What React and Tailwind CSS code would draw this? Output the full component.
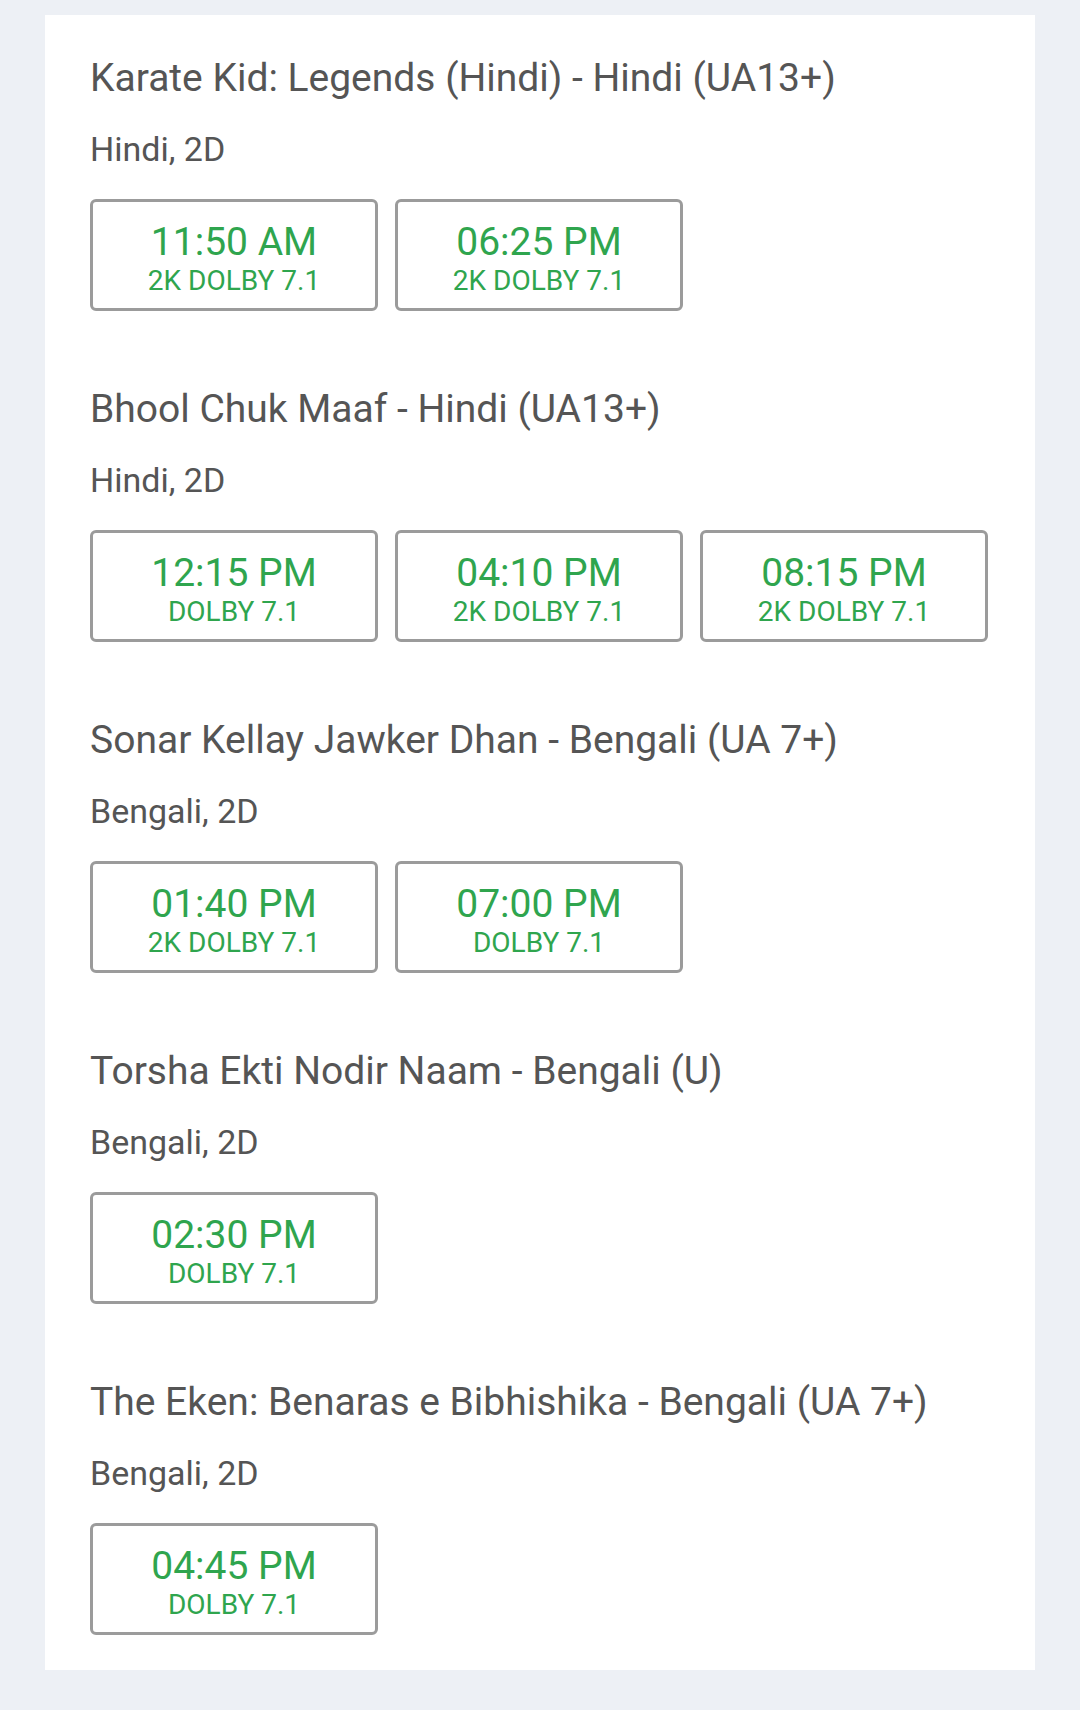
import React from "react";

const sections = [
  {
    title: "Karate Kid: Legends (Hindi) - Hindi (UA13+)",
    sub: "Hindi, 2D",
    shows: [
      ["11:50 AM", "2K DOLBY 7.1"],
      ["06:25 PM", "2K DOLBY 7.1"],
    ],
  },
  {
    title: "Bhool Chuk Maaf - Hindi (UA13+)",
    sub: "Hindi, 2D",
    shows: [
      ["12:15 PM", "DOLBY 7.1"],
      ["04:10 PM", "2K DOLBY 7.1"],
      ["08:15 PM", "2K DOLBY 7.1"],
    ],
  },
  {
    title: "Sonar Kellay Jawker Dhan - Bengali (UA 7+)",
    sub: "Bengali, 2D",
    shows: [
      ["01:40 PM", "2K DOLBY 7.1"],
      ["07:00 PM", "DOLBY 7.1"],
    ],
  },
  {
    title: "Torsha Ekti Nodir Naam - Bengali (U)",
    sub: "Bengali, 2D",
    shows: [["02:30 PM", "DOLBY 7.1"]],
  },
  {
    title: "The Eken: Benaras e Bibhishika - Bengali (UA 7+)",
    sub: "Bengali, 2D",
    shows: [["04:45 PM", "DOLBY 7.1"]],
  },
];

export default function App() {
  return (
    <div
      className="w-[1080px] h-[1710px] bg-[#edf0f5] pt-[15px] px-[45px]"
      style={{ fontFamily: "Roboto, 'Noto Sans', sans-serif" }}
    >
      <div className="bg-white px-[45px] pt-[41px] pb-[35px] flex flex-col gap-[76px]">
        {sections.map((s, i) => (
          <div key={i} className="flex flex-col">
            <div className="text-[39px] leading-[44px] text-[#555555]">{s.title}</div>
            <div className="mt-[29px] text-[34px] leading-[40px] text-[#555555]">{s.sub}</div>
            <div className="mt-[30px] flex gap-[17px]">
              {s.shows.map(([t, f], j) => (
                <div
                  key={j}
                  className="w-[288px] h-[112px] border-[3px] border-[#9b9b9b] rounded-[6px] flex flex-col items-center pt-[20px] text-[#2fa54e]"
                >
                  <div className="text-[39px] leading-[40px]">{t}</div>
                  <div className="mt-[4px] text-[28px] leading-[30px]">{f}</div>
                </div>
              ))}
            </div>
          </div>
        ))}
      </div>
    </div>
  );
}
